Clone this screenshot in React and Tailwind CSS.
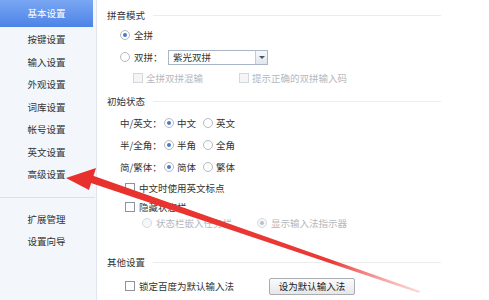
import React from "react";

const font = { fontFamily: '"Noto Sans CJK SC", "Noto Sans", sans-serif' };

function Radio({ checked, disabled }) {
  return (
    <span
      className={
        "inline-flex items-center justify-center w-[10px] h-[10px] rounded-full border shrink-0 " +
        (disabled ? "border-[#d6d9de] bg-[#f6f7f9]" : "border-[#b3b8c0] bg-white")
      }
    >
      {checked && (
        <span
          className={
            "w-[4px] h-[4px] rounded-full " + (disabled ? "bg-[#b8c0cc]" : "bg-[#4b79c9]")
          }
        />
      )}
    </span>
  );
}

function Check({ disabled }) {
  return (
    <span
      className={
        "inline-block w-[10px] h-[10px] border shrink-0 " +
        (disabled ? "border-[#d4d7dc] bg-[#f4f5f7]" : "border-[#8e949c] bg-white")
      }
    />
  );
}

function Header({ children, className = "" }) {
  return (
    <div className={"flex items-center h-[20px] " + className}>
      <span className="text-[#333] shrink-0">{children}</span>
      <span className="ml-[8px] h-px bg-[#ececec] w-[288px]" />
    </div>
  );
}

function Choice({ label, first, second }) {
  return (
    <div className="flex items-center h-[20px] mt-[2px] pl-[13px]">
      <span className="w-[44px]">{label}</span>
      <Radio checked />
      <span className="ml-[3px] w-[26px]">{first}</span>
      <Radio />
      <span className="ml-[3px]">{second}</span>
    </div>
  );
}

const items = ["按键设置", "输入设置", "外观设置", "词库设置", "帐号设置", "英文设置", "高级设置"];

export default function App() {
  return (
    <div className="relative w-[489px] h-[300px] overflow-hidden bg-white flex text-[9.5px] text-[#333]" style={font}>
      <div className="w-[97px] h-full bg-[#f3f6fb] border-r border-[#e1e6ee] flex flex-col">
        <div className="w-[93px] h-[27px] flex items-center justify-center text-white bg-gradient-to-b from-[#7aa7f3] to-[#4c83e6]">
          基本设置
        </div>
        <div className="mt-px">
          {items.map((t) => (
            <div key={t} className="w-[93px] h-[22.5px] flex items-center justify-center">
              {t}
            </div>
          ))}
        </div>
        <div className="mt-[11px] w-[95px] h-px bg-[#dde1e7]" />
        <div className="mt-[11px]">
          {["扩展管理", "设置向导"].map((t) => (
            <div key={t} className="w-[93px] h-[21.5px] flex items-center justify-center">
              {t}
            </div>
          ))}
        </div>
      </div>

      <div className="flex-1 pl-[10px] flex flex-col">
        <Header className="mt-[5px]">拼音模式</Header>
        <div className="flex items-center h-[20px] pl-[13px]">
          <Radio checked />
          <span className="ml-[4px]">全拼</span>
        </div>
        <div className="flex items-center h-[24px] pl-[13px]">
          <Radio />
          <span className="ml-[4px] w-[34px]">双拼：</span>
          <div className="flex items-center w-[100px] h-[15px] border border-[#a9b6c9] bg-white">
            <span className="flex-1 pl-[4px]">紫光双拼</span>
            <span className="w-[12px] h-full flex items-center justify-center bg-gradient-to-b from-[#f7f9fc] to-[#e1e6ee] border-l border-[#c3ccd9]">
              <span className="w-0 h-0 border-l-[3px] border-r-[3px] border-t-[3px] border-l-transparent border-r-transparent border-t-[#4a5668]" />
            </span>
          </div>
        </div>
        <div className="flex items-center h-[18px] pl-[26px] text-[#b4b8be]">
          <Check disabled />
          <span className="ml-[3px] w-[93px]">全拼双拼混输</span>
          <Check disabled />
          <span className="ml-[3px]">提示正确的双拼输入码</span>
        </div>

        <Header className="mt-[4px]">初始状态</Header>
        <Choice label="中/英文：" first="中文" second="英文" />
        <Choice label="半/全角：" first="半角" second="全角" />
        <Choice label="简/繁体：" first="简体" second="繁体" />
        <div className="flex items-center h-[20px] mt-[1px] pl-[18px]">
          <Check />
          <span className="ml-[4px]">中文时使用英文标点</span>
        </div>
        <div className="flex items-center h-[18px] pl-[18px]">
          <Check />
          <span className="ml-[4px]">隐藏状态栏</span>
        </div>
        <div className="flex items-center h-[14px] pl-[35px] text-[#b4b8be]">
          <Radio disabled />
          <span className="ml-[4px] w-[101px]">状态栏嵌入任务栏</span>
          <Radio checked disabled />
          <span className="ml-[4px]">显示输入法指示器</span>
        </div>

        <Header className="mt-[22px]">其他设置</Header>
        <div className="flex items-center h-[20px] mt-[4px] pl-[18px]">
          <Check />
          <span className="ml-[4px] w-[130px]">锁定百度为默认输入法</span>
          <button className="w-[86px] h-[17px] border border-[#a9adb3] rounded-[2px] bg-gradient-to-b from-[#fbfbfb] to-[#e6e7e9] text-[#222] text-[9.5px] flex items-center justify-center" style={font}>
            设为默认输入法
          </button>
        </div>
      </div>

      <svg className="absolute left-0 top-0 pointer-events-none" width="489" height="300">
        <defs>
          <linearGradient id="fade" x1="65" y1="178" x2="420" y2="292" gradientUnits="userSpaceOnUse">
            <stop offset="0" stopColor="#e8302c" />
            <stop offset="0.75" stopColor="#ea3a36" />
            <stop offset="1" stopColor="#f4a0a0" stopOpacity="0.4" />
          </linearGradient>
        </defs>
        <polygon points="88,182 91,175 420,291 419,293" fill="url(#fade)" />
        <polygon points="66,178 96,168 89,190" fill="#e8302c" />
      </svg>
    </div>
  );
}
